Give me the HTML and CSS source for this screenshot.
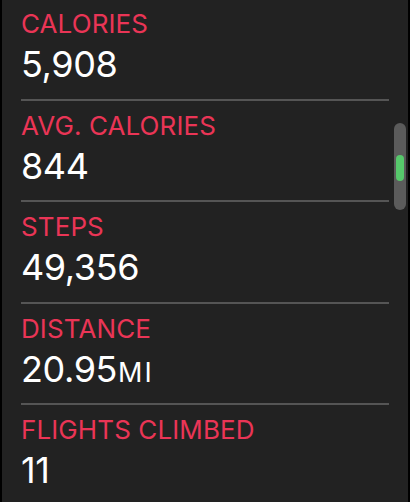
FILE: index.html
```html
<!DOCTYPE html>
<html lang="en">
<head>
    <meta charset="UTF-8">
    <meta name="viewport" content="width=device-width, initial-scale=1.0">
    <title>Summary</title>
    <link rel="stylesheet" href="styles.css">
</head>
<body>
    <div class="screen">
        <div class="list">
            <div class="row">
                <div class="label">CALORIES</div>
                <div class="value">5,908</div>
            </div>
            <div class="row">
                <div class="label">AVG. CALORIES</div>
                <div class="value">844</div>
            </div>
            <div class="row">
                <div class="label">STEPS</div>
                <div class="value">49,356</div>
            </div>
            <div class="row">
                <div class="label">DISTANCE</div>
                <div class="value">20.95<span class="unit">MI</span></div>
            </div>
            <div class="row last">
                <div class="label">FLIGHTS CLIMBED</div>
                <div class="value">11</div>
            </div>
        </div>

        <div class="scrollbar">
            <div class="thumb"></div>
        </div>
    </div>
</body>
</html>
```

FILE: styles.css
```css
body {
    margin: 0;
    padding: 0;
    background-color: #000;
    font-family: Inter, "Noto Sans", sans-serif;
}

.screen {
    position: relative;
    height: 502px;
    margin: 0 2px;
    background-color: #222;
    overflow: hidden;
}

.list {
    display: flex;
    flex-direction: column;
    padding: 0 19px 0 19px;
    margin-top: -1px;
}

.row {
    flex: none;
    height: 101.6px;
    padding-top: 10px;
    box-sizing: border-box;
    border-bottom: 2px solid #555;
}

.row.last {
    border-bottom: none;
}

.label {
    color: #ea3556;
    font-size: 26px;
    line-height: 30px;
    letter-spacing: 0.1px;
}

.value {
    margin-top: 2px;
    color: #fff;
    font-size: 36px;
    line-height: 46px;
    letter-spacing: -0.4px;
}

.unit {
    margin-left: 1px;
    font-size: 27px;
    letter-spacing: 2px;
}

.scrollbar {
    position: absolute;
    top: 123px;
    right: 2px;
    width: 12px;
    height: 87px;
    border-radius: 6px;
    background-color: #5b5b5b;
}

.thumb {
    margin: 32px auto 0;
    width: 8px;
    height: 26px;
    border-radius: 4px;
    background-color: #56c86b;
}
```
